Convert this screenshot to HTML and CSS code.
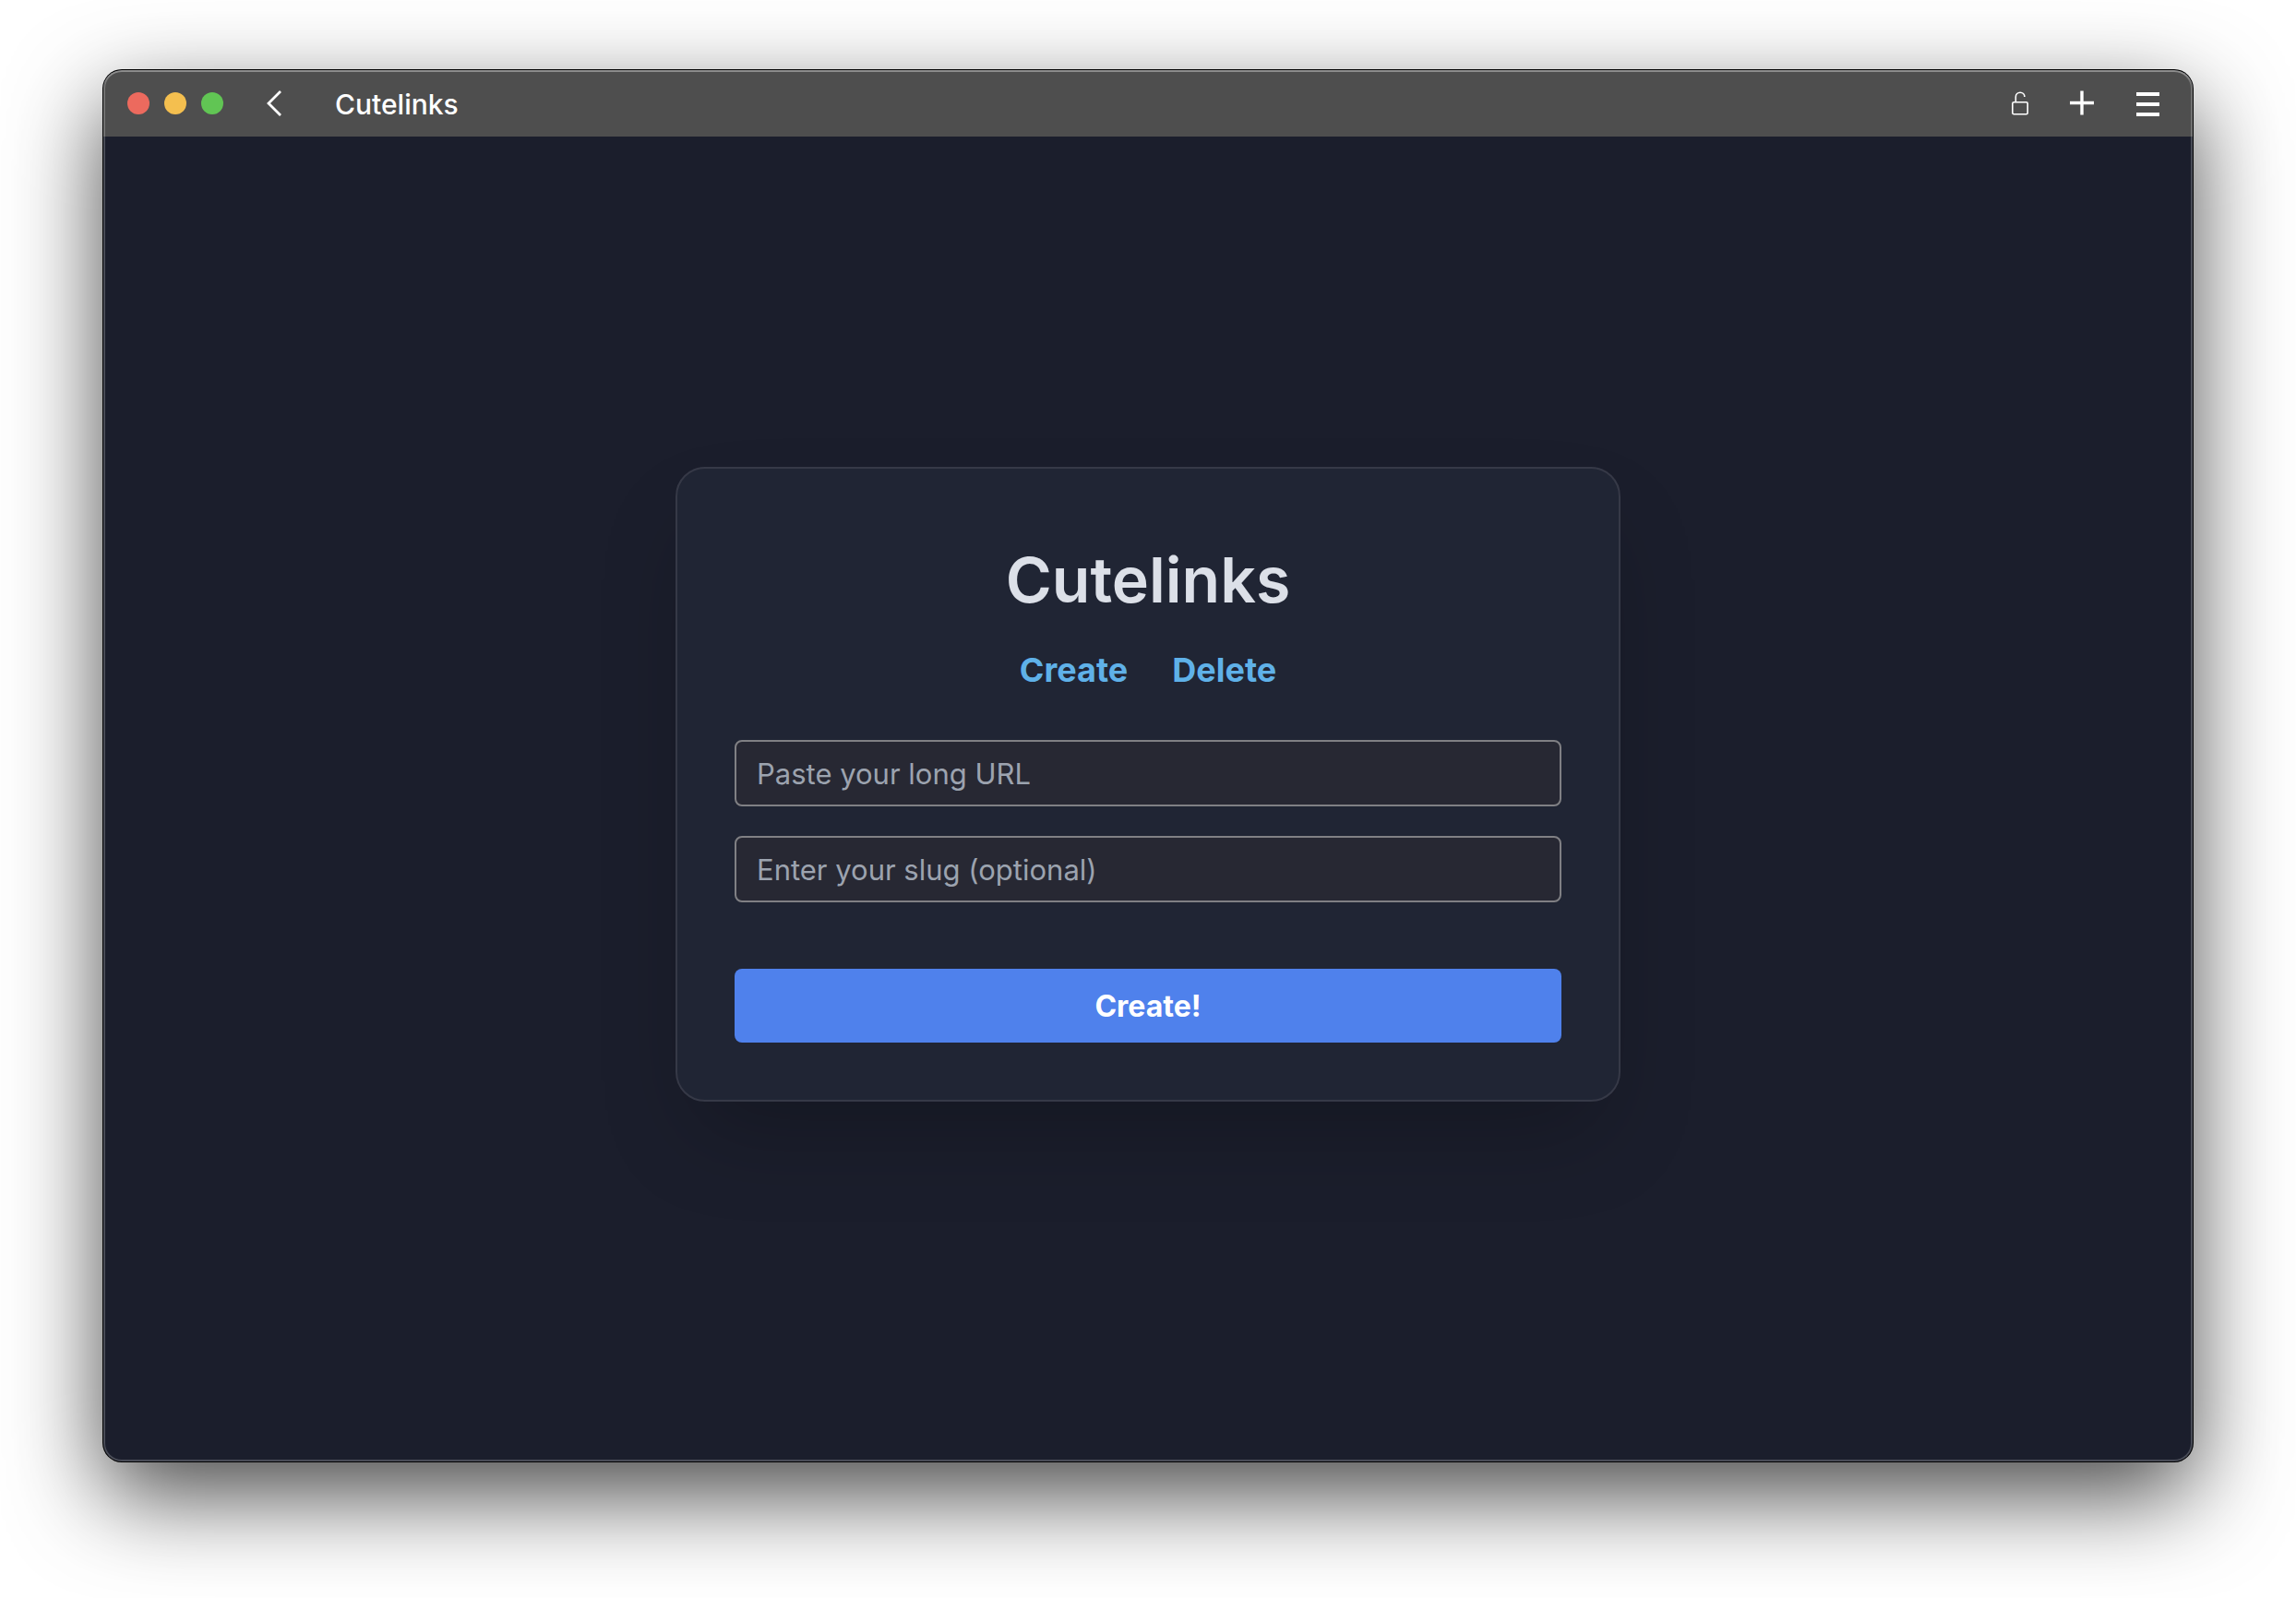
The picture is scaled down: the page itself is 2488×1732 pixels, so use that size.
FILE: index.html
```html
<!DOCTYPE html>
<html lang="en">
<head>
<meta charset="utf-8">
<meta name="viewport" content="width=device-width, initial-scale=1">
<title>Cutelinks</title>
<link rel="stylesheet" href="styles.css">
</head>
<body>
<div class="window">
  <header class="titlebar">
    <div class="lights">
      <span class="light light-close"></span>
      <span class="light light-minimize"></span>
      <span class="light light-zoom"></span>
    </div>
    <button class="icon-button back" type="button" aria-label="Back">
      <svg width="18" height="30" viewBox="0 0 18 30"><path d="M16 2 3 15 16 28" fill="none" stroke="#fff" stroke-width="2.8"/></svg>
    </button>
    <span class="app-name">Cutelinks</span>
    <div class="actions">
      <button class="icon-button" type="button" aria-label="Site security">
        <svg width="18" height="26" viewBox="0 0 18 26"><g fill="none" stroke="#fff" stroke-width="1.6"><rect x=".8" y="11.8" width="16.4" height="13" rx="1.5"/><path d="M4.3 11.8V6A4.8 4.8 0 0 1 13.9 6"/></g></svg>
      </button>
      <button class="icon-button" type="button" aria-label="New tab">
        <svg width="26" height="28" viewBox="0 0 26 28"><path d="M0 13.5H26M13 .5V26.5" stroke="#fff" stroke-width="3.4"/></svg>
      </button>
      <button class="icon-button" type="button" aria-label="Menu">
        <svg width="26" height="28" viewBox="0 0 26 28"><path d="M1 5H26M1 16H26M1 27H26" stroke="#fff" stroke-width="4" transform="translate(0 -1)"/></svg>
      </button>
    </div>
  </header>
  <main class="content">
    <section class="card">
      <h1 class="title">Cutelinks</h1>
      <nav class="nav">
        <a class="nav-link" href="#create">Create</a>
        <a class="nav-link" href="#delete">Delete</a>
      </nav>
      <form class="form">
        <input class="field" type="text" aria-label="Long URL" placeholder="Paste your long URL">
        <input class="field" type="text" aria-label="Slug" placeholder="Enter your slug (optional)">
        <button class="submit" type="submit">Create!</button>
      </form>
    </section>
  </main>
</div>
</body>
</html>
```
FILE: styles.css
```css
* {
  box-sizing: border-box;
}

body {
  margin: 0;
  min-height: 100vh;
  padding: 76px 112px 148px;
  display: flex;
  background: #fff;
  font-family: Inter, "Liberation Sans", sans-serif;
}

.window {
  position: relative;
  flex: 1;
  display: flex;
  flex-direction: column;
  overflow: hidden;
  border-radius: 20px;
  background: #1b1e2c;
  box-shadow: 0 0 0 1px #000, 0 36px 100px rgba(0, 0, 0, 0.72);
}

/* light rim along the inside edge of the window */
.window::after {
  content: "";
  position: absolute;
  inset: 0;
  border-radius: inherit;
  box-shadow: inset 0 0 0 2px rgba(255, 255, 255, 0.2), inset 0 2px 0 rgba(255, 255, 255, 0.2);
  pointer-events: none;
}

.titlebar {
  height: 72px;
  display: flex;
  align-items: center;
  padding: 0 36px 0 26px;
  background: #4e4e4e;
  color: #fff;
}

.lights {
  display: flex;
  gap: 16px;
}

.light {
  width: 24px;
  height: 24px;
  border-radius: 50%;
}

.light-close { background: #ec6a5e; }
.light-minimize { background: #f4bf4f; }
.light-zoom { background: #61c554; }

.icon-button {
  display: flex;
  padding: 0;
  border: 0;
  background: none;
}

.back {
  margin: 0 57px 0 46px;
}

.app-name {
  padding-top: 2px;
  font-size: 30px;
  font-weight: 500;
  line-height: 36px;
}

.actions {
  margin-left: auto;
  display: flex;
  align-items: center;
  gap: 45px;
}

.content {
  flex: 1;
  display: flex;
  align-items: center;
  justify-content: center;
  padding: 32px 32px 64px;
}

.card {
  width: 100%;
  max-width: 1024px;
  padding: 80px 62px 62px;
  border: 2px solid #363947;
  border-radius: 32px;
  background: #202534;
  box-shadow: 0 50px 100px -24px rgba(0, 0, 0, 0.25);
}

.title {
  margin: 0 0 26px;
  font-size: 68px;
  font-weight: 600;
  line-height: 80px;
  text-align: center;
  color: #dce0e8;
}

.nav {
  display: flex;
  justify-content: center;
  gap: 48px;
  margin-bottom: 44px;
}

.nav-link {
  font-size: 36px;
  font-weight: 700;
  line-height: 64px;
  color: #5fb1e8;
  text-decoration: none;
}

.form {
  display: flex;
  flex-direction: column;
  gap: 32px;
}

.field {
  width: 100%;
  height: 72px;
  padding: 0 22px;
  border: 2px solid #808084;
  border-radius: 8px;
  background: #272833;
  color: #dce0e8;
  font: 400 31px Inter, "Liberation Sans", sans-serif;
}

.field::placeholder {
  color: #9ca3af;
  opacity: 1;
}

.submit {
  height: 80px;
  margin-top: 40px;
  border: 0;
  border-radius: 8px;
  background: #4f81ec;
  color: #fff;
  font: 700 32px Inter, "Liberation Sans", sans-serif;
}
```
